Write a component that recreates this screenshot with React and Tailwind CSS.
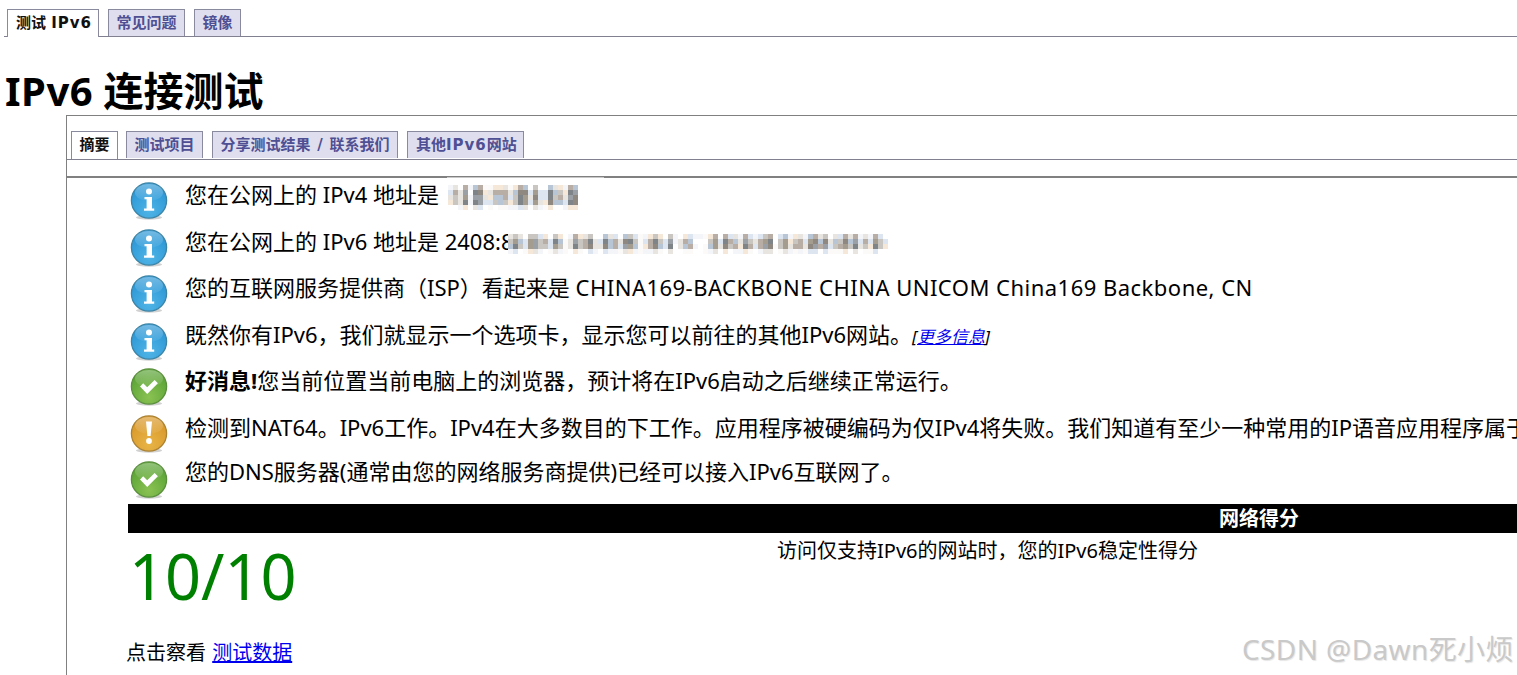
import React from "react";

const shades = [
  ["#ffffff", "#fbfaf8", "#f3f5f8"],
  ["#f6e8d8", "#dde6f0", "#e8e4df"],
  ["#b7c5d5", "#b8aea5", "#c9c6c2"],
  ["#7f8489", "#8f8880", "#9aa0a6", "#a59c90"],
];
function Mosaic({ columns, rows, seed, className = "" }) {
  const cells = [];
  let s = seed;
  const cols = columns.length;
  for (let y = 0; y < rows; y++) {
    for (let x = 0; x < cols; x++) {
      s = (s * 9301 + 49297) % 233280;
      const r = s / 233280;
      let lvl = Number(columns[x]);
      if (y === 0 && lvl > 0) lvl -= 1;
      if (y === rows - 1) lvl = Math.max(0, lvl - 2);
      const pal = shades[lvl];
      cells.push(<rect key={x + "-" + y} x={x * 5} y={y * 5} width="5" height="5" fill={pal[Math.floor(r * pal.length)]} />);
    }
  }
  return (
    <svg width={cols * 5} height={rows * 5} viewBox={`0 0 ${cols * 5} ${rows * 5}`} className={"inline-block align-middle " + className}>
      {cells}
    </svg>
  );
}

function Ball({ kind }) {
  const c = {
    info: ["#8fd0f2", "#2c97d6", "#3c84a6", "#4fb4e6"],
    ok: ["#a6d66a", "#5aa335", "#5a8f3c", "#8ac253"],
    warn: ["#f2cb70", "#d9982a", "#aa8232", "#e8b446"],
  }[kind];
  const id = "ball-" + kind;
  return (
    <svg width="38" height="38" viewBox="0 0 38 38" className="shrink-0">
      <defs>
        <radialGradient id={id} cx="50%" cy="80%" r="70%">
          <stop offset="0%" stopColor={c[3]} />
          <stop offset="100%" stopColor={c[1]} />
        </radialGradient>
        <linearGradient id={id + "-g"} x1="0" y1="0" x2="0" y2="1">
          <stop offset="0%" stopColor="#ffffff" stopOpacity="0.35" />
          <stop offset="100%" stopColor="#ffffff" stopOpacity="0.04" />
        </linearGradient>
      </defs>
      <ellipse cx="19" cy="35.5" rx="13" ry="2.2" fill="#000" opacity="0.18" />
      <circle cx="19" cy="18.5" r="17.6" fill={`url(#${id})`} stroke={c[2]} strokeWidth="1.3" />
      <ellipse cx="19" cy="10.5" rx="14" ry="8.5" fill={`url(#${id}-g)`} />
      {kind === "info" && (
        <g fill="#ffffff">
          <circle cx="19" cy="9.5" r="3" />
          <path d="M14.5 15h7.5v11.5h2.2v2.3H14v-2.3h2.6v-9.2h-2.1z" />
        </g>
      )}
      {kind === "ok" && <path d="M10 18.5l3.2-3.2 4 4 7.4-7.4 3.3 3.3-10.7 10.7z" fill="#ffffff" />}
      {kind === "warn" && (
        <g fill="#ffffff">
          <path d="M16 6.5h6l-1.4 14.5h-3.2z" />
          <circle cx="19" cy="26" r="2.9" />
        </g>
      )}
    </svg>
  );
}

function Tab({ active, className = "", children }) {
  return (
    <div
      className={
        "h-[27px] border border-b-0 border-[#8a8a9e] text-[15px] leading-[26px] font-bold whitespace-nowrap [font-family:'DejaVu_Sans','Noto_Sans_CJK_SC',sans-serif] " +
        (active ? "bg-white text-[#111] " : "bg-[#dedeee] text-[#4f4f93] ") +
        className
      }
    >
      {children}
    </div>
  );
}

function Row({ kind, h, top, children }) {
  return (
    <div className={"flex items-start whitespace-nowrap " + h}>
      <div className={"ml-[2px] mr-[17px] " + top}>
        <Ball kind={kind} />
      </div>
      <div className="text-[22px] leading-[32px] text-black">{children}</div>
    </div>
  );
}

export default function App() {
  return (
    <div className="relative w-[1517px] h-[675px] overflow-hidden bg-white text-black [font-family:'Noto_Sans','Noto_Sans_CJK_SC',sans-serif]">
      <div className="flex gap-[9px] ml-[4px] pt-[9px] pl-[3px] border-b border-[#808090]">
        <Tab active className="-mb-px h-[28px] pl-[8px] pr-[6px]">
          测试 <span className="tracking-[1px]">IPv6</span>
        </Tab>
        <Tab className="px-[7.5px]">常见问题</Tab>
        <Tab className="px-[7.5px]">镜像</Tab>
      </div>

      <h1 className="mt-[29px] ml-[5px] text-[40px] leading-[49px] font-bold">
        <span className="tracking-[0.5px]">IPv6</span> 连接测试
      </h1>

      <div className="ml-[66px] w-[2400px] border-l border-t border-[#808080] h-[600px]">
        <div className="flex gap-[9px] pt-[15px] pl-[4px] h-[44px] border-b border-[#808090]">
          <Tab active className="-mb-px h-[28px] px-[7.5px] -mr-[1px]">摘要</Tab>
          <Tab className="px-[7.5px]">测试项目</Tab>
          <Tab className="px-[7.5px] [word-spacing:1.5px]">分享测试结果 / 联系我们</Tab>
          <Tab className="pl-[8px] pr-[6px]">
            其他<span className="tracking-[1px]">IPv6</span>网站
          </Tab>
        </div>
        <div className="h-[16px]" />
        <div className="border-t-2 border-[#808080]" />

        <div className="pl-[61px]">
          <Row kind="info" h="h-[47px]" top="mt-[4px]">
            您在公网上的 IPv4 地址是<span className="inline-block w-[9px]" />
            <Mosaic columns="12130331122212331311322133" rows={5} seed={17} />
          </Row>
          <Row kind="info" h="h-[46px]" top="mt-[4px]">
            您在公网上的 IPv6 地址是 2408:8
            <Mosaic
              className="relative -ml-[6px]"
              columns="2321332213201322311322133201232130122000231322132123302312213323122323121321"
              rows={4}
              seed={91}
            />
          </Row>
          <Row kind="info" h="h-[47px]" top="mt-[3.5px]">
            您的互联网服务提供商（ISP）看起来是 <span className="tracking-[0.48px]">CHINA169-BACKBONE CHINA UNICOM China169 Backbone, CN</span>
          </Row>
          <Row kind="info" h="h-[46px]" top="mt-[4.5px]">
            既然你有IPv6，我们就显示一个选项卡，显示您可以前往的其他IPv6网站。
            <span className="italic text-[17px] text-black">
              [<a className="text-[#0000ee] underline">更多信息</a>]
            </span>
          </Row>
          <Row kind="ok" h="h-[47px]" top="mt-[3.5px]">
            <b>好消息!</b>您当前位置当前电脑上的浏览器，预计将在IPv6启动之后继续正常运行。
          </Row>
          <Row kind="warn" h="h-[44px]" top="mt-[3.5px]">
            检测到NAT64。IPv6工作。IPv4在大多数目的下工作。应用程序被硬编码为仅IPv4将失败。我们知道有至少一种常用的IP语音应用程序属于这一类。
          </Row>
          <Row kind="ok" h="h-[49px]" top="mt-[5.5px]">
            您的DNS服务器(通常由您的网络服务商提供)已经可以接入IPv6互联网了。
          </Row>

          <div className="w-[2262px]">
            <div className="h-[29px] bg-black text-white text-center font-bold text-[20px] leading-[29px]">网络得分</div>
            <div className="grid grid-cols-[649px_1fr] h-[101px]">
              <div className="pl-[1px] text-[63px] leading-[86px] text-[#008000]">10/10</div>
              <div className="text-[20px] leading-[36px] whitespace-nowrap">访问仅支持IPv6的网站时，您的IPv6稳定性得分</div>
            </div>
            <div className="-ml-[2px] text-[20px] leading-[38px] [word-spacing:1px]">
              点击察看 <a className="text-[#0000ee] underline">测试数据</a>
            </div>
          </div>
        </div>
      </div>

      <div className="absolute left-[447px] top-[177px] w-[157px] h-px bg-[#c8c8c8]" />
      <div className="absolute left-[1242px] top-[630px] text-[28px] leading-[38px] tracking-[0.4px] text-[#c9c9c9] [text-shadow:1px_1px_1px_#e6e6e6] whitespace-nowrap">CSDN @Dawn死小烦</div>
    </div>
  );
}
